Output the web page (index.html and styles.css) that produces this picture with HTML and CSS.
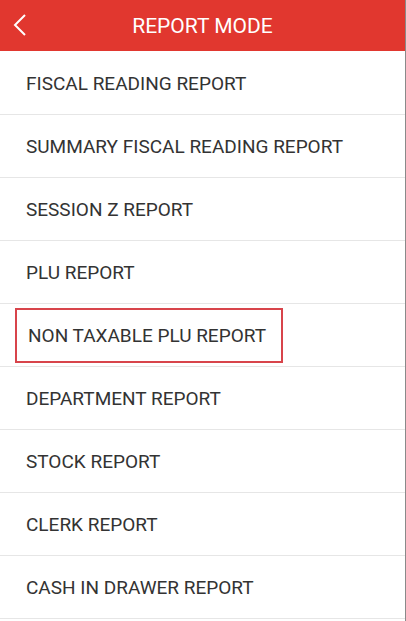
FILE: index.html
```html
<!DOCTYPE html>
<html lang="en">
<head>
    <meta charset="UTF-8">
    <meta name="viewport" content="width=device-width, initial-scale=1.0">
    <title>Report Mode</title>
    <link rel="stylesheet" href="styles.css">
</head>
<body>
    <div class="screen">
        <div class="header">
            <span class="back">
                <svg width="14" height="22" viewBox="0 0 14 22">
                    <path d="M12 1 L2 11 L12 21" fill="none" stroke="#fff" stroke-width="2"/>
                </svg>
            </span>
            <h1>REPORT MODE</h1>
        </div>
        <ul class="menu">
            <li><span class="label">FISCAL READING REPORT</span></li>
            <li><span class="label">SUMMARY FISCAL READING REPORT</span></li>
            <li><span class="label">SESSION Z REPORT</span></li>
            <li><span class="label">PLU REPORT</span></li>
            <li class="selected"><span class="label">NON TAXABLE PLU REPORT</span></li>
            <li><span class="label">DEPARTMENT REPORT</span></li>
            <li><span class="label">STOCK REPORT</span></li>
            <li><span class="label">CLERK REPORT</span></li>
            <li><span class="label">CASH IN DRAWER REPORT</span></li>
        </ul>
    </div>
</body>
</html>
```

FILE: styles.css
```css
body {
    margin: 0;
    font-family: Roboto, "Liberation Sans", sans-serif;
    background: #fff;
}
.screen {
    width: 405px;
    height: 621px;
    border-right: 1px solid #8a8a8a;
    overflow: hidden;
}
.header {
    height: 51px;
    background-color: #e1372f;
    display: flex;
    align-items: center;
    justify-content: center;
    position: relative;
}
.header h1 {
    margin: 0;
    font-size: 21px;
    font-weight: 400;
    color: #fff;
}
.back {
    position: absolute;
    left: 13px;
    top: 14px;
    display: flex;
}
.menu {
    list-style: none;
    margin: 0;
    padding: 1px 0 0;
}
.menu li {
    height: 62px;
    border-bottom: 1px solid #e6e6e6;
    display: flex;
    align-items: center;
    padding-left: 15px;
}
.label {
    font-size: 19px;
    color: #333;
    padding: 2px 10px 0;
    line-height: 50px;
    border: 1px solid transparent;
}
.selected .label {
    border: 2px solid #d8444b;
    padding: 1px 15px 0 11px;
}
```
